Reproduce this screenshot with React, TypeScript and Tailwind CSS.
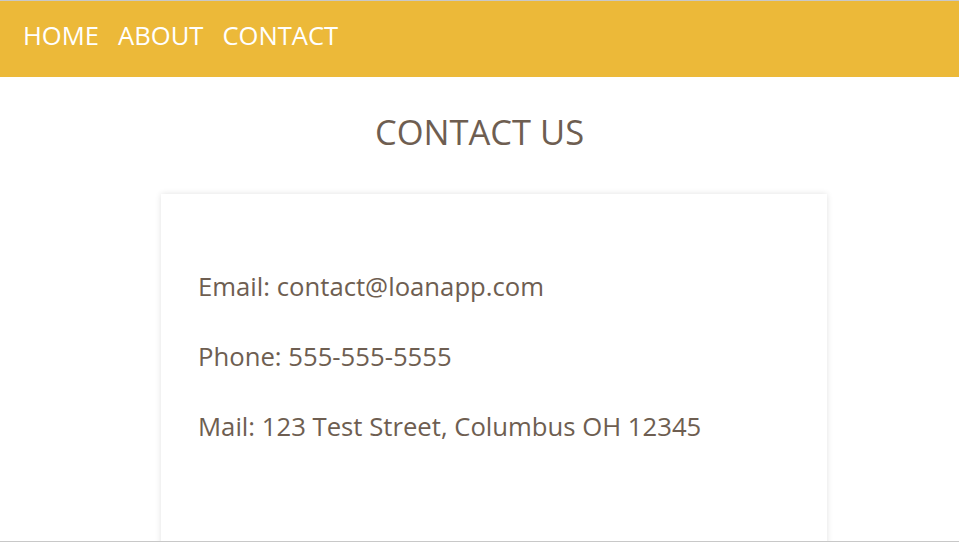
export default function App() {
  const font = { fontFamily: '"Open Sans", "Noto Sans", sans-serif' };
  return (
    <div className="h-[542px] w-full overflow-hidden border-t border-b border-[#c8c8c8] bg-white" style={font}>
      <nav className="flex h-[76px] items-center gap-[19px] bg-[#ecb939] pb-[6px] pl-[23px] text-[25.6px] text-white">
        <span>HOME</span>
        <span>ABOUT</span>
        <span>CONTACT</span>
      </nav>
      <h1 className="mt-[33px] text-center text-[34.5px] leading-[44px] text-[#6e5e51]">CONTACT US</h1>
      <div className="ml-[161px] mt-[40px] h-[400px] w-[666px] bg-white pl-[37px] pt-[70px] text-[25.7px] text-[#6e5e51] shadow-[0_0_6px_rgba(0,0,0,0.12)]">
        <p className="leading-[46px]">Email: contact@loanapp.com</p>
        <p className="mt-[24px] leading-[46px]">Phone: 555-555-5555</p>
        <p className="mt-[24px] leading-[46px]">Mail: 123 Test Street, Columbus OH 12345</p>
      </div>
    </div>
  );
}
